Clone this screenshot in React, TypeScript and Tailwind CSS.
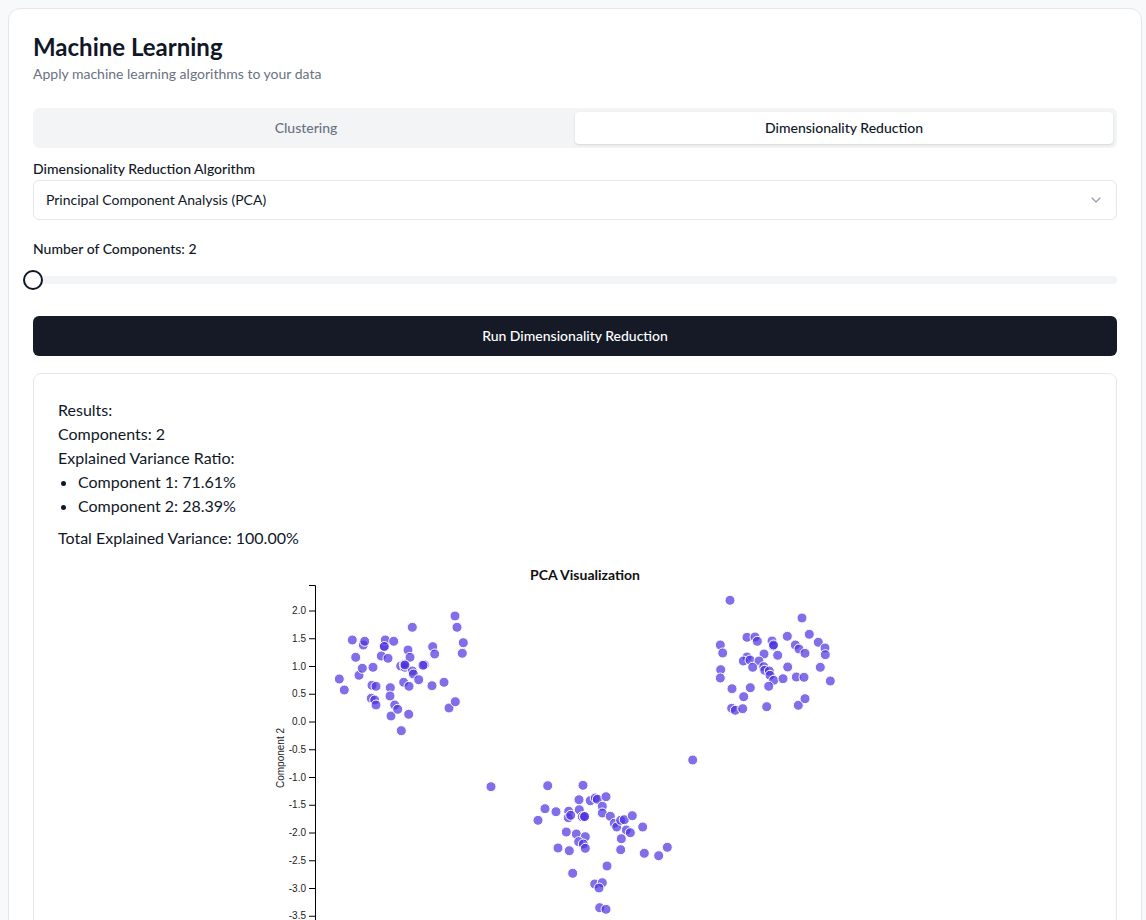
import { ChevronDown } from "lucide-react";

const yTicks = [2, 1.5, 1, 0.5, 0, -0.5, -1, -1.5, -2, -2.5, -3, -3.5];

// pixel positions of the projected points (page coords, shifted by the svg origin)
const points: [number, number][] = [
  [339.3, 679], [344.3, 690], [352.3, 640], [355.7, 657.3], [359, 675.3], [362.3, 668.3],
  [363.3, 645], [364.7, 641.3], [373, 667.3], [372, 685.3], [376, 686.3], [371.3, 698.3],
  [374.7, 700], [376, 705], [381.3, 656], [384.3, 646], [385.3, 640], [388, 658.3],
  [393.7, 641.3], [390.3, 687.7], [390, 696], [391, 716], [394.7, 705], [397.7, 709.3],
  [401.3, 730.7], [400.7, 666], [405, 667.3], [404.3, 664.3], [403.7, 682.3], [408, 650],
  [410, 657.3], [412.3, 627.3], [409, 686.3], [408.7, 714.3], [412.3, 671], [413.3, 674],
  [418.7, 679.7], [424.3, 664.7], [423, 665.3], [432.7, 646.7], [434.7, 654], [432, 685.7],
  [444, 682.3], [455, 616], [457, 627.3], [463.3, 642.7], [462.3, 653.3], [449, 708],
  [455.3, 701.7], [491, 786.7], [384.3, 646.5], [405, 665],
  [730, 600.3], [802, 618], [809.3, 634.3], [747, 637.3], [755, 637], [757.3, 641.3],
  [772, 641], [773.3, 646], [787.3, 636.3], [795.3, 645], [799, 649], [818.3, 642.3],
  [825, 648], [825.3, 654.7], [805, 653.3], [777.7, 655.3], [764, 654], [720.3, 645],
  [722.7, 653], [747, 657], [743.3, 661], [750, 660], [759, 661], [752.7, 667.3],
  [763.7, 666.7], [764.7, 670.3], [769.3, 671], [770, 675.3], [773.7, 680.3], [783, 678.7],
  [787.7, 667], [796.3, 677], [804, 677.3], [820.3, 667.3], [830.3, 681], [720.7, 669.7],
  [720.3, 678], [732, 688.7], [750.3, 687.7], [768.7, 686.3], [743.7, 696.7], [731.7, 708.3],
  [735.3, 710.3], [742.7, 708.7], [766.7, 706.7], [798.3, 705.3], [805, 698.7], [773.5, 645],
  [692.7, 760],
  [547.7, 785.7], [583, 785.3], [545, 808.7], [538, 820.3], [556, 811.7], [568.7, 811.3],
  [568.3, 817.7], [570.7, 815.3], [579, 799.7], [579.3, 809.7], [582.3, 816.7], [584.7, 816.7],
  [590.3, 800.7], [595.3, 798], [597.3, 799.3], [606, 796.7], [602.3, 806.3], [602.3, 813],
  [610.3, 816.3], [614.3, 823.3], [616.7, 827], [620.7, 820.3], [624.3, 819.7], [632.3, 815.7],
  [626.3, 830], [630.3, 832.7], [642.7, 827], [621.3, 838.7], [566.3, 832], [576.3, 834],
  [585.3, 836.7], [578.7, 841.7], [583.3, 844], [585.3, 848.3], [558, 848], [569.3, 850.7],
  [620.7, 849.7], [644.3, 853.3], [658.7, 855.7], [667.3, 847.3], [607, 866], [572.7, 873.3],
  [594.7, 884], [602.3, 882.7], [599, 888], [599.7, 907.7], [606, 909.3], [584.5, 816.5],
];

function ScatterPlot() {
  // svg top-left sits at page (58, 556)
  const ox = 58;
  const oy = 556;
  const yPos = (v: number) => 722 - v * 55.5;
  return (
    <svg width={1034} height={400} className="block overflow-visible">
      <g transform={`translate(${-ox},${-oy})`} fontFamily="'Liberation Sans', Arial, sans-serif">
        <text x={585} y={580} textAnchor="middle" fontSize={14} fontWeight={700} fill="#111" fontFamily="Lato, sans-serif">
          PCA Visualization
        </text>
        <path d="M309,585.5H315.5V1100" fill="none" stroke="#000" strokeWidth={1} />
        {yTicks.map((t) => (
          <g key={t} transform={`translate(0,${yPos(t)})`}>
            <line x1={309} x2={315} stroke="#000" />
            <text x={306} dy="0.32em" textAnchor="end" fontSize={10} fill="#222">
              {t.toFixed(1)}
            </text>
          </g>
        ))}
        <text transform="translate(284,758) rotate(-90)" textAnchor="middle" fontSize={10} fill="#222">
          Component 2
        </text>
        {points.map(([x, y], i) => (
          <circle key={i} cx={x} cy={y} r={5} fill="#4b30e0" fillOpacity={0.7} stroke="#fff" strokeWidth={1} />
        ))}
      </g>
    </svg>
  );
}

export default function App() {
  return (
    <div className="min-h-screen bg-[#f8f9fa] pt-2 pl-2 font-['Lato',sans-serif] text-gray-900">
      <div className="w-[1134px] rounded-xl border border-gray-200 bg-white px-6 pt-[22px]">
        <h1 className="text-2xl leading-8 font-bold">Machine Learning</h1>
        <p className="mt-px text-sm text-gray-500">Apply machine learning algorithms to your data</p>

        <div className="mt-6 grid grid-cols-2 rounded-md bg-gray-100 p-1">
          <div className="flex h-8 items-center justify-center rounded-sm text-sm font-medium text-gray-500">
            Clustering
          </div>
          <div className="flex h-8 items-center justify-center rounded-sm bg-white text-sm font-medium text-gray-900 shadow-sm">
            Dimensionality Reduction
          </div>
        </div>

        <div className="mt-[11px] text-sm font-medium">Dimensionality Reduction Algorithm</div>
        <div className="mt-px flex h-10 items-center justify-between rounded-md border border-gray-200 px-3 text-sm">
          <span>Principal Component Analysis (PCA)</span>
          <ChevronDown className="h-4 w-4 text-gray-400" />
        </div>

        <div className="mt-[19px] text-sm font-medium">Number of Components: 2</div>
        <div className="relative mt-[17px] h-2 rounded-full bg-gray-100">
          <div className="absolute -top-1.5 -left-2.5 h-5 w-5 rounded-full border-2 border-gray-900 bg-white" />
        </div>

        <button className="mt-8 flex h-10 w-full items-center justify-center rounded-md bg-[#151a26] text-sm font-medium text-white">
          Run Dimensionality Reduction
        </button>

        <div className="mt-[17px] rounded-lg border border-gray-200 px-6 pt-6 text-base">
          <p>Results:</p>
          <p>Components: 2</p>
          <p>Explained Variance Ratio:</p>
          <ul className="list-disc pl-5">
            <li>Component 1: 71.61%</li>
            <li>Component 2: 28.39%</li>
          </ul>
          <p className="mt-2">Total Explained Variance: 100.00%</p>
          <div className="mt-1.5 h-[400px]">
            <ScatterPlot />
          </div>
        </div>
      </div>
    </div>
  );
}
